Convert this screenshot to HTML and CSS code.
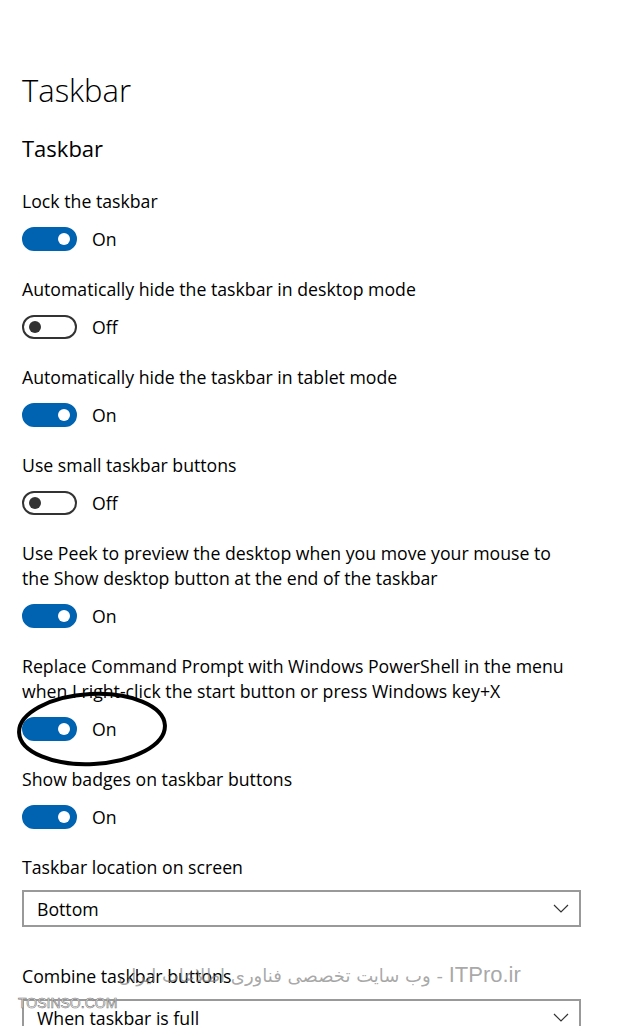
FILE: index.html
```html
<!DOCTYPE html>
<html lang="en">

<head>
    <meta charset="UTF-8">
    <meta name="viewport" content="width=device-width, initial-scale=1.0">
    <title>Taskbar Settings</title>
    <link rel="stylesheet" href="styles.css">
</head>

<body>

    <div class="page">
        <h1 class="title">Taskbar</h1>
        <h2 class="subtitle">Taskbar</h2>

        <div class="setting">
            <div class="label">Lock the taskbar</div>
            <div class="switch-row">
                <span class="switch on"></span>
                <span class="state">On</span>
            </div>
        </div>

        <div class="setting">
            <div class="label">Automatically hide the taskbar in desktop mode</div>
            <div class="switch-row">
                <span class="switch"></span>
                <span class="state">Off</span>
            </div>
        </div>

        <div class="setting">
            <div class="label">Automatically hide the taskbar in tablet mode</div>
            <div class="switch-row">
                <span class="switch on"></span>
                <span class="state">On</span>
            </div>
        </div>

        <div class="setting">
            <div class="label">Use small taskbar buttons</div>
            <div class="switch-row">
                <span class="switch"></span>
                <span class="state">Off</span>
            </div>
        </div>

        <div class="setting">
            <div class="label">Use Peek to preview the desktop when you move your mouse to<br>the Show desktop button at the end of the taskbar</div>
            <div class="switch-row">
                <span class="switch on"></span>
                <span class="state">On</span>
            </div>
        </div>

        <div class="setting">
            <div class="label">Replace Command Prompt with Windows PowerShell in the menu<br>when I right-click the start button or press Windows key+X</div>
            <div class="switch-row">
                <span class="switch on"></span>
                <span class="state">On</span>
                <!-- hand drawn circle from the screenshot -->
                <svg class="marker" width="160" height="80" viewBox="0 0 160 80">
                    <ellipse cx="80" cy="40" rx="73" ry="35" fill="none" stroke="#000" stroke-width="4" transform="rotate(-3 80 40)" />
                </svg>
            </div>
        </div>

        <div class="setting">
            <div class="label">Show badges on taskbar buttons</div>
            <div class="switch-row">
                <span class="switch on"></span>
                <span class="state">On</span>
            </div>
        </div>

        <div class="setting select-setting">
            <div class="label">Taskbar location on screen</div>
            <div class="dropdown">
                <span>Bottom</span>
                <svg class="chevron" width="16" height="10" viewBox="0 0 16 10">
                    <polyline points="1,1 8,8 15,1" fill="none" stroke="#333" stroke-width="1.2" />
                </svg>
            </div>
        </div>

        <div class="setting select-setting">
            <div class="label">Combine taskbar buttons</div>
            <div class="dropdown">
                <span>When taskbar is full</span>
                <svg class="chevron" width="16" height="10" viewBox="0 0 16 10">
                    <polyline points="1,1 8,8 15,1" fill="none" stroke="#333" stroke-width="1.2" />
                </svg>
            </div>
        </div>

        <div class="watermark">وب سایت تخصصی فناوری اطلاعات ایران - <span class="brand">ITPro.ir</span></div>
        <div class="site-mark">TOSINSO.COM</div>
    </div>

</body>

</html>
```

FILE: styles.css
```css
body {
    margin: 0;
    background: #fff;
    color: #000;
    font-family: "Open Sans", "Noto Sans", sans-serif;
    overflow: hidden;
}

.page {
    position: relative;
    padding: 66px 0 0 22px;
    height: 1026px;
    box-sizing: border-box;
}

.title {
    font-size: 31px;
    font-weight: 300;
    line-height: 48px;
    margin: 0;
}

.subtitle {
    font-size: 22px;
    font-weight: 400;
    line-height: 34px;
    margin: 17px 0 24px 0;
}

.setting {
    margin-bottom: 26px;
}

.setting.select-setting {
    margin-bottom: 37px;
}

.label {
    font-size: 17.7px;
    line-height: 25px;
}

.switch-row {
    position: relative;
    display: flex;
    align-items: center;
    gap: 15px;
    margin-top: 13px;
    height: 24px;
}

.switch {
    width: 55px;
    height: 24px;
    box-sizing: border-box;
    border: 2px solid #333;
    border-radius: 12px;
    position: relative;
    flex-shrink: 0;
}

.switch::after {
    content: "";
    position: absolute;
    top: 4px;
    left: 5px;
    width: 12px;
    height: 12px;
    border-radius: 50%;
    background: #333;
}

.switch.on {
    background: #0063b1;
    border-color: #0063b1;
}

.switch.on::after {
    left: auto;
    right: 5px;
    background: #fff;
}

.state {
    font-size: 17.7px;
}

.marker {
    position: absolute;
    left: -10px;
    top: -28px;
}

.dropdown {
    margin-top: 10px;
    width: 559px;
    height: 37px;
    box-sizing: border-box;
    border: 2px solid #999;
    display: flex;
    align-items: center;
    justify-content: space-between;
    padding: 0 10px 0 13px;
    font-size: 17.7px;
}

.watermark {
    position: absolute;
    left: 118px;
    top: 962px;
    font-family: "DejaVu Sans", sans-serif;
    font-size: 18px;
    color: rgba(130, 130, 130, 0.7);
    white-space: nowrap;
}

.watermark .brand {
    font-family: "Liberation Sans", sans-serif;
    font-size: 22px;
}

.site-mark {
    position: absolute;
    left: 18px;
    top: 995px;
    font-family: "Liberation Sans", sans-serif;
    font-size: 14px;
    color: #fff;
    -webkit-text-stroke: 0.6px #777;
}
```
